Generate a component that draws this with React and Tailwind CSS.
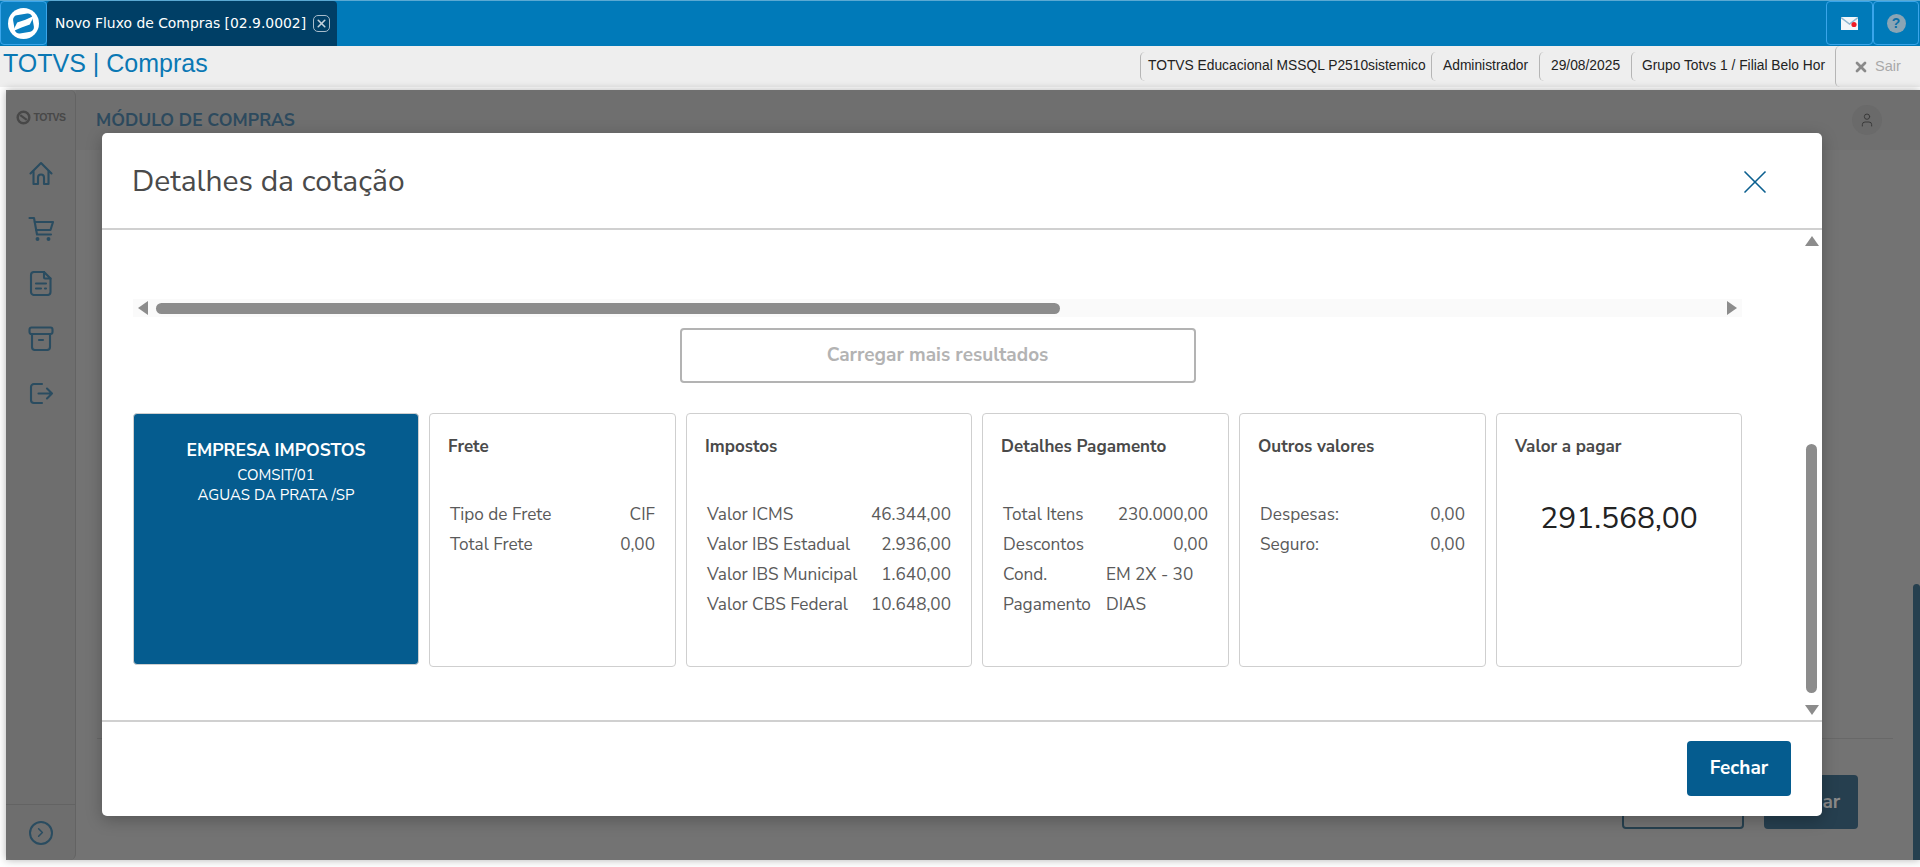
import React from 'react';
import { X, ChevronRight, User } from 'lucide-react';

const bodyFont = "font-['Nunito_Sans','Noto_Sans','Open_Sans',sans-serif]";

const cards = [
  { title: 'Frete', width: 'w-[247px]', rows: [['Tipo de Frete', 'CIF'], ['Total Frete', '0,00']] },
  {
    title: 'Impostos',
    width: 'w-[286px]',
    rows: [
      ['Valor ICMS', '46.344,00'],
      ['Valor IBS Estadual', '2.936,00'],
      ['Valor IBS Municipal', '1.640,00'],
      ['Valor CBS Federal', '10.648,00'],
    ],
  },
];

const TotvsLogo = () => (
  <svg viewBox="-16 -16 32 32" className="w-[31px] h-[31px]">
    <circle r="16" fill="#ffffff" />
    <rect x="-10" y="-9.5" width="20" height="19" rx="4.5" fill="#0a7fc0" transform="rotate(-10)" />
    <path d="M-11 8 L-6.5 -1 L2 -4 L11 -8 L6.5 1 L-2 4 Z" fill="#ffffff" />
  </svg>
);

const TotvsSmallMark = () => (
  <svg viewBox="0 0 16 16" className="w-[15px] h-[15px]" fill="none" stroke="#484848">
    <circle cx="8" cy="8" r="6.2" strokeWidth="2.6" />
    <path d="M4.5 5.5 L11.5 10.5" strokeWidth="2.2" />
  </svg>
);

// sidebar icons, drawn to follow the reference strokes
const SideIcon = ({ children }) => (
  <svg viewBox="0 0 26 25" className="w-[26px] h-[25px]" fill="none" stroke="#2a4c60" strokeWidth="2.1" strokeLinecap="round" strokeLinejoin="round">
    {children}
  </svg>
);

const HomeIcon = () => (
  <SideIcon>
    <path d="M2.5 12.5 L13 2 L23.5 12.5" />
    <path d="M5.5 10.5 V23 H10 V16.5 a3 3 0 0 1 6 0 V23 H20.5 V10.5" />
  </SideIcon>
);

const CartIcon = () => (
  <SideIcon>
    <path d="M1.5 2 H6 L9 18.5 H23" />
    <path d="M6.8 6 H25 L22.5 14 H8.2" />
    <circle cx="9.5" cy="23" r="0.9" fill="#2a4c60" />
    <circle cx="20.5" cy="23" r="0.9" fill="#2a4c60" />
  </SideIcon>
);

const DocIcon = () => (
  <SideIcon>
    <path d="M6 1 H16 L22.5 7.5 V21 a3 3 0 0 1 -3 3 H6 a3 3 0 0 1 -3 -3 V4 a3 3 0 0 1 3 -3 z" />
    <path d="M16 1 V6.5 a1 1 0 0 0 1 1 H22.5" />
    <path d="M8 12.5 H18 M8 17.5 H13 M17 17.5 H18" />
  </SideIcon>
);

const ArchiveIcon = () => (
  <SideIcon>
    <rect x="1.5" y="1.5" width="23" height="6.5" rx="2" />
    <path d="M4 8 V21 a3 3 0 0 0 3 3 H19 a3 3 0 0 0 3 -3 V8" />
    <path d="M11 14 H15" />
  </SideIcon>
);

const ExitIcon = () => (
  <SideIcon>
    <path d="M14 3 H6 a3 3 0 0 0 -3 3 V19 a3 3 0 0 0 3 3 H14" />
    <path d="M10.5 12.5 H24 M19 7.5 L24 12.5 L19 17.5" />
  </SideIcon>
);

const DataCard = ({ title, width, rows }) => (
  <div className={`${width} h-[254px] shrink-0 rounded-[4px] border border-[#cfcfcf] bg-white px-[18px]`}>
    <h3 className="mt-[22px] text-[17px] leading-[22px] font-bold text-[#4a4a4a]">{title}</h3>
    <div className="mt-[45px] px-[2px] flex flex-col gap-[6px]">
      {rows.map(([label, value]) => (
        <div key={label} className="flex justify-between text-[17.2px] leading-[24px] text-[#5a5a5a]">
          <span>{label}</span>
          <span>{value}</span>
        </div>
      ))}
    </div>
  </div>
);

const App = () => {
  return (
    <div className="relative w-[1920px] h-[867px] overflow-hidden bg-white font-['Liberation_Sans',sans-serif]">
      {/* top bar */}
      <div className="h-[46px] flex items-stretch bg-[#007ab9] border-t border-[#5aa9d3]">
        <div className="w-[47px] h-[44px] flex items-center justify-center rounded-[4px] border border-[#3aa5ea] bg-[#0a7fc0]">
          <TotvsLogo />
        </div>
        <div className="w-[290px] flex items-center gap-[7px] pl-[8px] rounded-t-[4px] bg-[#003f66] text-white text-[13.9px] font-['DejaVu_Sans',sans-serif]">
          <span>Novo Fluxo de Compras [02.9.0002]</span>
          <span className="w-[17px] h-[17px] flex items-center justify-center rounded-[5px] border border-[#a8bccb] text-[#c5d2dc]">
            <X size={13} strokeWidth={3} />
          </span>
        </div>
        <div className="ml-auto flex items-stretch pr-[1px]">
          <div className="w-[47px] h-[44px] flex items-center justify-center rounded-[4px] border border-[#3aa5ea]">
            <svg viewBox="0 0 17 13" className="w-[17px] h-[13px]">
              <rect x="0" y="0" width="17" height="13" fill="#f2f6fa" />
              <path d="M0 0.5l8.5 6.5L17 0.5" fill="none" stroke="#8fb6d0" strokeWidth="1.4" />
              <circle cx="13" cy="7.5" r="2.6" fill="#f01c25" />
            </svg>
          </div>
          <div className="w-[46px] h-[44px] flex items-center justify-center rounded-[4px] border border-[#3aa5ea]">
            <span className="w-[19px] h-[19px] flex items-center justify-center rounded-full bg-[#8aa5b5] text-[#0a6ea6] text-[14px] font-bold">?</span>
          </div>
        </div>
      </div>

      {/* sub header */}
      <div className="h-[41px] flex items-center bg-[#eeeeee]">
        <span className="pl-[3px] pb-[6px] text-[25px] text-[#0a78b4]">TOTVS | Compras</span>
        <div className="ml-auto flex items-center h-full text-[13.8px] text-[#222222]">
          <span className="h-[29px] flex items-center pl-[7px] w-[291px] border-l border-[#b5b5b5] rounded-l-[5px]">TOTVS Educacional MSSQL P2510sistemico</span>
          <span className="h-[29px] flex items-center pl-[11px] w-[108px] border-l border-[#b5b5b5] rounded-l-[5px]">Administrador</span>
          <span className="h-[29px] flex items-center pl-[11px] w-[92px] border-l border-[#b5b5b5] rounded-l-[5px]">29/08/2025</span>
          <span className="h-[29px] flex items-center pl-[10px] w-[204px] border-l border-[#b5b5b5] rounded-l-[5px]">Grupo Totvs 1 / Filial Belo Hor</span>
          <span className="h-full w-[85px] flex items-center gap-[6px] pl-[17px] border-l border-[#b5b5b5] rounded-l-[5px] text-[14.5px] text-[#a9a9a9]">
            <X size={16} strokeWidth={4} className="text-[#8a8a8a]" />
            Sair
          </span>
        </div>
      </div>

      {/* page behind the dialog */}
      <div className="mt-[3px] ml-[6px] h-[770px] flex bg-[#737373] shadow-[0_0_8px_rgba(0,0,0,0.3)]">
        <aside className="w-[70px] flex flex-col items-center rounded-[6px] border-r border-[#636363] bg-[#6e6e6e]">
          <div className="mt-[20px] flex items-center gap-[3px] text-[#484848]">
            <TotvsSmallMark />
            <span className="text-[10.5px] font-bold tracking-[-0.6px]">TOTVS</span>
          </div>
          <div className="mt-[35px] flex flex-col items-center gap-[30px]">
            <HomeIcon />
            <CartIcon />
            <DocIcon />
            <ArchiveIcon />
            <ExitIcon />
          </div>
          <div className="mt-auto w-full h-[56px] flex items-center justify-center border-t border-[#636363]">
            <span className="w-[24px] h-[24px] rounded-full border-2 border-[#2a4c60] flex items-center justify-center text-[#2a4c60]">
              <ChevronRight size={15} strokeWidth={2.5} />
            </span>
          </div>
        </aside>
        <main className="flex-1 flex flex-col">
          <header className="h-[60px] flex items-center justify-between pl-[20px] pr-[38px] bg-[#6f6f6f]">
            <span className={`${bodyFont} text-[17.5px] font-bold text-[#2d4a5e]`}>MÓDULO DE COMPRAS</span>
            <span className="w-[30px] h-[30px] rounded-full bg-[#6a6a6a] flex items-center justify-center text-[#3a3a3a]">
              <User size={16} strokeWidth={1.5} />
            </span>
          </header>
          <div className="flex-1 flex">
            <div className="flex-1 flex flex-col justify-end pb-[31px] pl-[21px] pr-[20px]">
              <div className="border-t border-[#686868] pt-[36px] flex justify-end gap-[20px] pr-[35px]">
                <span className="w-[122px] h-[54px] rounded-[4px] border-2 border-[#26404f]" />
                <span className={`${bodyFont} w-[94px] h-[54px] rounded-[4px] bg-[#263f4f] flex items-center justify-center text-[#8a8a8a] font-bold text-[19px]`}>Fechar</span>
              </div>
            </div>
            <div className="w-[7px] self-end h-[276px] rounded-t-[4px] bg-[#26404f]" />
          </div>
        </main>
      </div>

      {/* dialog */}
      <div className={`${bodyFont} absolute left-[102px] top-[133px] w-[1720px] h-[683px] flex flex-col rounded-[5px] bg-white shadow-[0_4px_16px_rgba(0,0,0,0.25)]`}>
        <div className="h-[97px] shrink-0 flex items-center justify-between pl-[30px] pr-[47px] pt-[2px] border-b-2 border-[#d0d0d0]">
          <h2 className="text-[30px] text-[#4a4a4a]">Detalhes da cotação</h2>
          <X size={40} strokeWidth={1} className="text-[#0b5f8f]" />
        </div>

        <div className="flex-1 flex min-h-0">
          <div className="w-[1702px] pl-[31px] pr-[62px] pt-[69px]">
            {/* horizontal scroll */}
            <div className="h-[18px] flex items-center bg-[#fafafa] px-[5px]">
              <span className="w-0 h-0 border-y-[7px] border-y-transparent border-r-[10px] border-r-[#8c8c8c]" />
              <span className="ml-[8px] w-[904px] h-[11px] rounded-full bg-[#8c8c8c]" />
              <span className="ml-auto w-0 h-0 border-y-[7px] border-y-transparent border-l-[10px] border-l-[#8c8c8c]" />
            </div>
            <div className="mt-[11px] flex justify-center">
              <button className="w-[516px] h-[55px] rounded-[4px] border-2 border-[#b3b3b3] bg-white text-[19px] font-bold text-[#b3b3b3]">Carregar mais resultados</button>
            </div>
            <div className="mt-[30px] flex gap-[10px]">
              <div className="w-[286px] h-[252px] shrink-0 rounded-[4px] border border-[#cfcfcf] bg-[#055c8f] pt-[23px] text-center text-white">
                <div className="text-[17.5px] leading-[26px] font-bold">EMPRESA IMPOSTOS</div>
                <div className="mt-[2px] text-[15px] leading-[20px]">COMSIT/01</div>
                <div className="text-[15px] leading-[20px]">AGUAS DA PRATA /SP</div>
              </div>
              <DataCard {...cards[0]} />
              <DataCard {...cards[1]} />
              <div className="w-[247px] h-[254px] shrink-0 rounded-[4px] border border-[#cfcfcf] bg-white px-[18px]">
                <h3 className="mt-[22px] text-[17px] leading-[22px] font-bold text-[#4a4a4a]">Detalhes Pagamento</h3>
                <div className="mt-[45px] px-[2px] grid grid-cols-[auto_1fr] gap-y-[6px] gap-x-[15px] text-[17.2px] leading-[24px] text-[#5a5a5a]">
                  <span>Total Itens</span>
                  <span className="text-right">230.000,00</span>
                  <span>Descontos</span>
                  <span className="text-right">0,00</span>
                  <span>Cond.</span>
                  <span>EM 2X - 30</span>
                  <span>Pagamento</span>
                  <span>DIAS</span>
                </div>
              </div>
              <DataCard title="Outros valores" width="w-[247px]" rows={[['Despesas:', '0,00'], ['Seguro:', '0,00']]} />
              <div className="w-[246px] h-[254px] shrink-0 rounded-[4px] border border-[#cfcfcf] bg-white px-[18px]">
                <h3 className="mt-[22px] text-[17px] leading-[22px] font-bold text-[#4a4a4a]">Valor a pagar</h3>
                <div className="mt-[41px] text-center text-[30px] leading-[40px] text-[#222222]">291.568,00</div>
              </div>
            </div>
          </div>
          {/* vertical scroll */}
          <div className="w-[15px] flex flex-col items-center pt-[6px] pb-[5px]">
            <span className="w-0 h-0 border-x-[7px] border-x-transparent border-b-[10px] border-b-[#8c8c8c]" />
            <span className="mt-[198px] w-[11px] h-[249px] rounded-full bg-[#8c8c8c]" />
            <span className="mt-auto w-0 h-0 border-x-[7px] border-x-transparent border-t-[10px] border-t-[#8c8c8c]" />
          </div>
        </div>

        <div className="h-[96px] shrink-0 flex items-center justify-end pr-[31px] pb-[2px] border-t-2 border-[#d0d0d0]">
          <button className="w-[104px] h-[55px] rounded-[4px] bg-[#055c8f] text-[19px] font-bold text-white">Fechar</button>
        </div>
      </div>
    </div>
  );
};

export default App;
